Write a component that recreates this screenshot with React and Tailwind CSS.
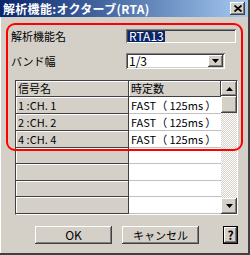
import React from "react";

const raised =
  "shadow-[inset_-1px_-1px_#404040,inset_1px_1px_#ffffff,inset_-2px_-2px_#808080,inset_2px_2px_#d4d0c8]";
const sunken =
  "shadow-[inset_1px_1px_#808080,inset_-1px_-1px_#ffffff,inset_2px_2px_#404040,inset_-2px_-2px_#d4d0c8]";

const font = { fontFamily: '"Noto Sans CJK JP", "Liberation Sans", sans-serif' };

function Tri({ up }) {
  return (
    <svg width="7" height="4" viewBox="0 0 7 4">
      {up ? <polygon points="3.5,0 7,4 0,4" fill="#000" /> : <polygon points="0,0 7,0 3.5,4" fill="#000" />}
    </svg>
  );
}

const fast = "FAST（\u2009125ms\u2009）";

const rows = [
  { h: "h-[17px]", a: "1 :CH. 1", b: fast },
  { h: "h-[17px]", a: "2 :CH. 2", b: fast },
  { h: "h-[17px]", a: "4 :CH. 4", b: fast },
  { h: "h-[16px]", a: "", b: "" },
  { h: "h-[17px]", a: "", b: "" },
  { h: "h-[16px]", a: "", b: "" },
  { h: "h-[17px]", a: "", b: "" },
];

export default function App() {
  return (
    <div
      className="relative w-[250px] h-[255px] bg-[#d4d0c8] flex flex-col border-r-2 border-b-2 border-r-[#404040] border-b-[#404040] text-black text-[11px] leading-none"
      style={font}
    >
      {/* title bar */}
      <div className="h-[17px] flex items-center justify-between bg-linear-to-r from-[#0a246a] to-[#a6caf0]">
        <span className="pl-[3px] text-white font-bold text-[12px] tracking-[0.3px]">解析機能:オクターブ(RTA)</span>
        <div className={`mr-[3px] w-[15px] h-[13px] bg-[#d4d0c8] flex items-center justify-center ${raised}`}>
          <svg width="8" height="7" viewBox="0 0 8 7">
            <path d="M0.5 0.5 L7.5 6.5 M7.5 0.5 L0.5 6.5" stroke="#000" strokeWidth="1.8" />
          </svg>
        </div>
      </div>

      {/* body */}
      <div className="flex-1 flex flex-col pl-[10px] border-l border-white">
        <div className="mt-[12px] h-[14px] flex items-center">
          <span className="w-[115px]">解析機能名</span>
          <div className={`w-[110px] h-[14px] bg-[#d4d0c8] flex items-center pl-[2px] ${sunken}`}>
            <span className="bg-[#0a246a] text-white text-[12px] h-[11px] flex items-center px-[1px]">RTA13</span>
          </div>
        </div>

        <div className="mt-[10px] h-[16px] flex items-center">
          <span className="w-[115px]">バンド幅</span>
          <div className={`w-[99px] h-[16px] bg-white flex items-center justify-between pl-[3px] pr-[2px] ${sunken}`}>
            <span className="text-[12px]">1/3</span>
            <div className={`w-[15px] h-[12px] bg-[#d4d0c8] flex items-center justify-center ${raised}`}>
              <Tri />
            </div>
          </div>
        </div>

        {/* grid */}
        <div className="mt-[11px] ml-[4px] w-[223px] h-[135px] flex border border-t-[#404040] border-l-[#404040] border-r-white border-b-white">
          <div className="w-[205px] flex flex-col">
            <div className="flex h-[16px]">
              <div className="w-[113px] bg-[#d4d0c8] border-b border-r border-[#404040] shadow-[inset_1px_1px_#ffffff] pl-[2px] flex items-center">
                信号名
              </div>
              <div className="flex-1 bg-[#d4d0c8] border-b border-r border-[#404040] shadow-[inset_1px_1px_#ffffff] pl-[2px] flex items-center">
                時定数
              </div>
            </div>
            {rows.map((r, i) => (
              <div key={i} className={`flex ${r.h}`}>
                <div className="w-[113px] bg-[#d4d0c8] border-b border-r border-[#404040] shadow-[inset_1px_1px_#ffffff] pl-[2px] flex items-center">
                  {r.a}
                </div>
                <div className="flex-1 bg-white border-b border-[#c0c0c0] pl-[2px] flex items-center">{r.b}</div>
              </div>
            ))}
          </div>
          <div className="w-[16px] flex flex-col">
            <div className={`h-[15px] bg-[#d4d0c8] flex items-center justify-center ${raised}`}>
              <Tri up />
            </div>
            <div className={`h-[17px] bg-[#d4d0c8] ${raised}`} />
            <div className="flex-1 bg-[repeating-conic-gradient(#d4d0c8_0%_25%,#ffffff_0%_50%)] bg-size-[2px_2px]" />
            <div className={`h-[16px] bg-[#d4d0c8] flex items-center justify-center ${raised}`}>
              <Tri />
            </div>
          </div>
        </div>

        {/* buttons */}
        <div className="mt-[11px] h-[18px] flex items-center">
          <div className={`ml-[24px] w-[77px] h-[18px] bg-[#d4d0c8] flex items-center justify-center text-[12px] ${raised}`}>
            OK
          </div>
          <div className={`ml-[10px] w-[77px] h-[18px] bg-[#d4d0c8] flex items-center justify-center ${raised}`}>
            キャンセル
          </div>
          <div className={`ml-[24px] w-[15px] h-[18px] bg-[#d4d0c8] flex items-center justify-center border border-black font-bold text-[12px] ${raised}`}>
            ?
          </div>
        </div>
      </div>

      {/* red highlight annotation */}
      <div className="absolute left-[6px] top-[23px] w-[237px] h-[128px] border-2 border-[#ff0000] rounded-[9px] pointer-events-none" />
    </div>
  );
}
